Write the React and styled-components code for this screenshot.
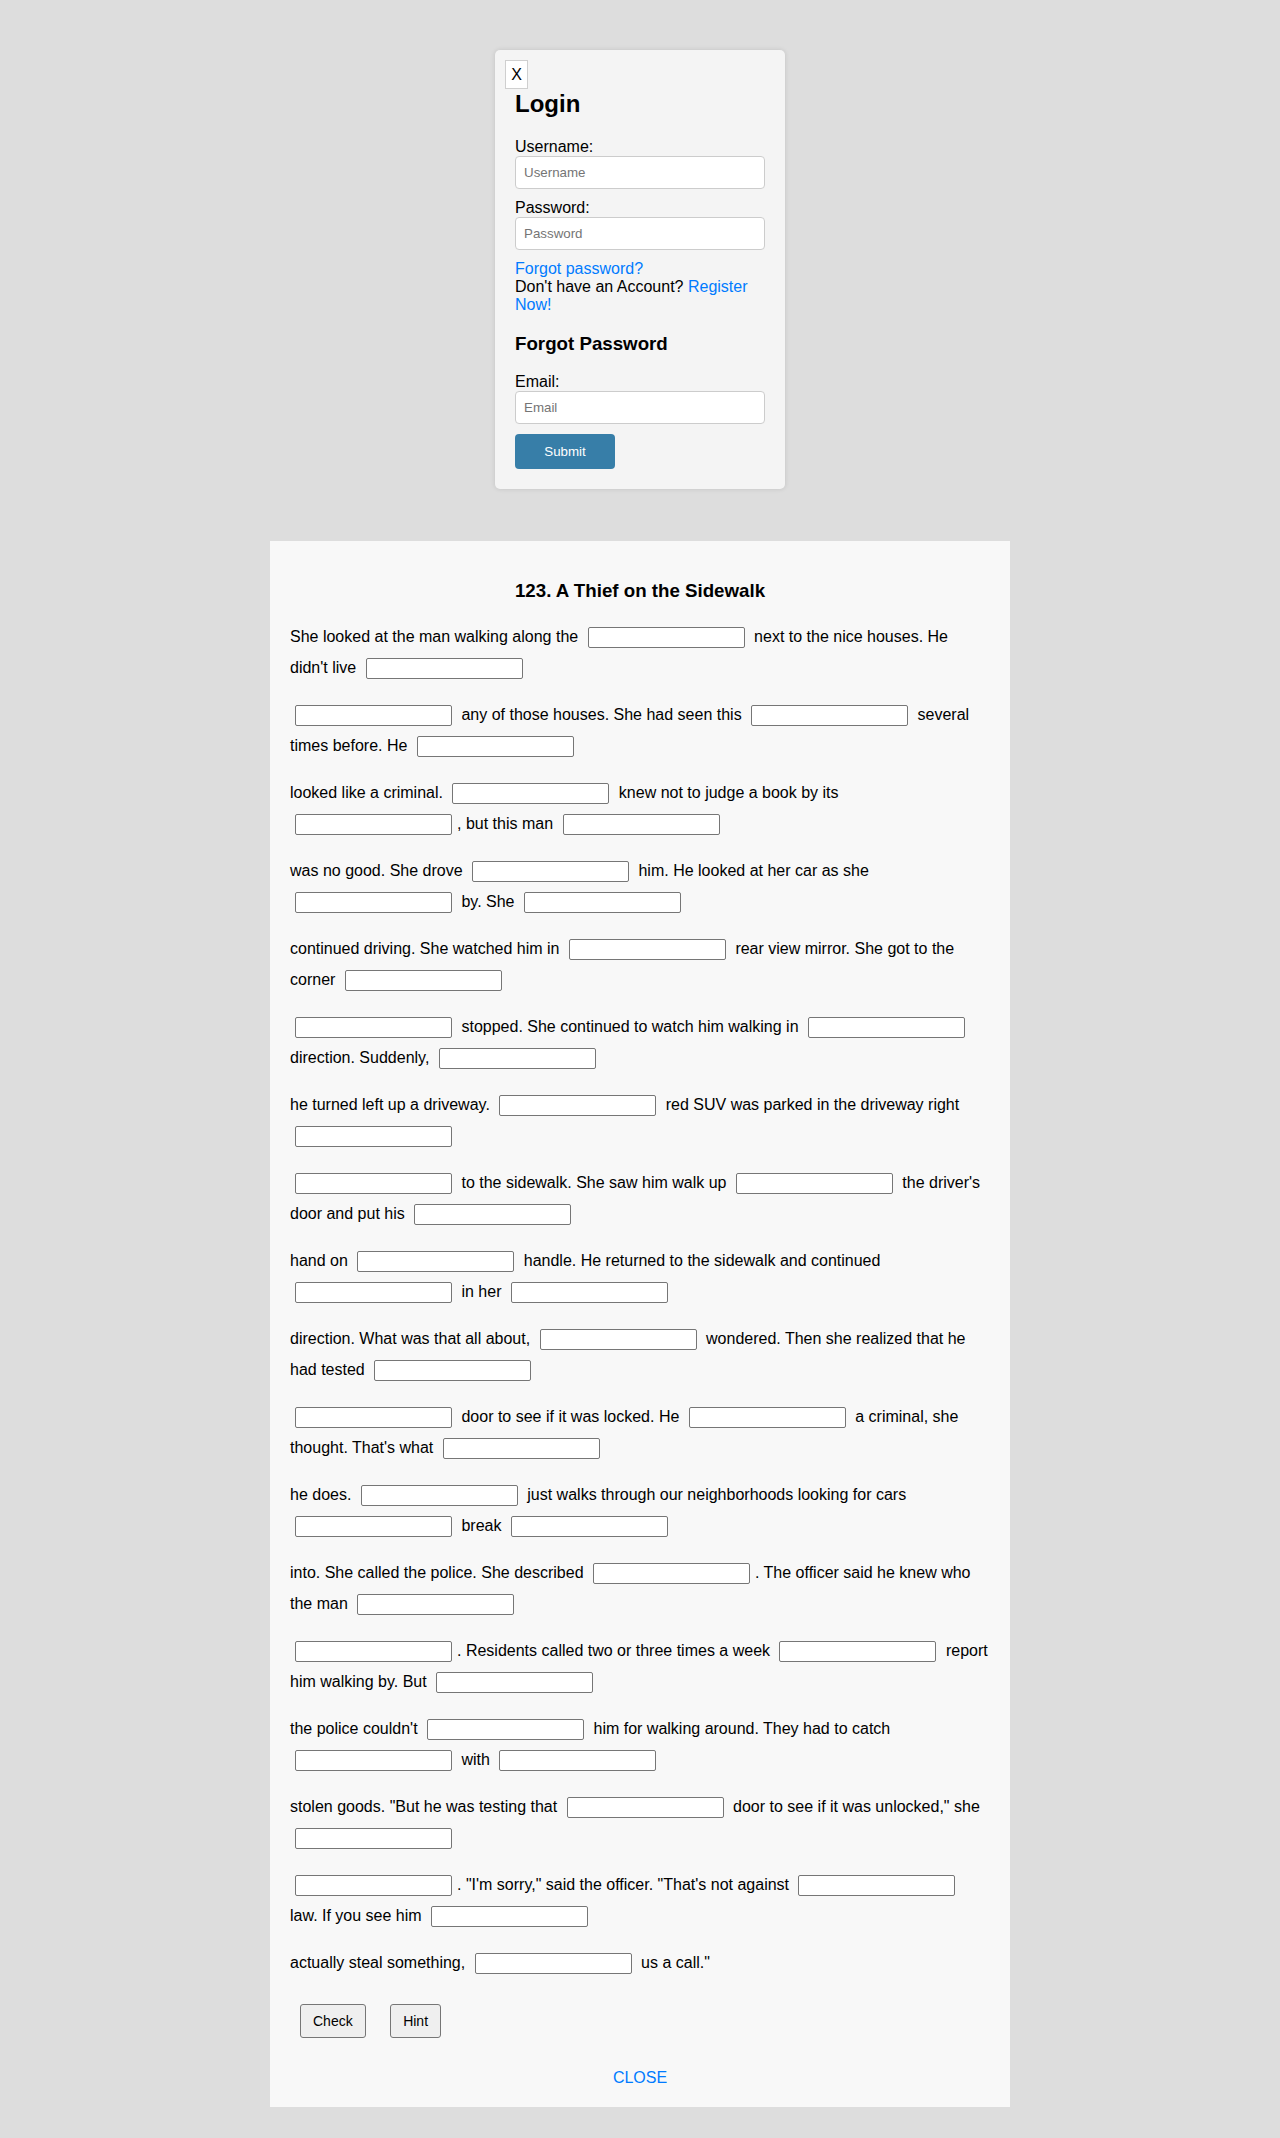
import React from "react";
import styled, { createGlobalStyle } from "styled-components";

const GlobalStyle = createGlobalStyle`
  html, body {
    margin: 0;
    padding: 0;
    background: #dddddd;
  }
  body {
    font-family: "Liberation Sans", Arial, sans-serif;
    font-size: 16px;
    color: #000;
  }
  * { box-sizing: border-box; }
`;

const Page = styled.div`
  display: flex;
  flex-direction: column;
  align-items: center;
  padding: 50px 0 31px;
`;

const LoginBox = styled.div`
  position: relative;
  width: 290px;
  padding: 20px;
  background: #f4f4f4;
  border-radius: 5px;
  box-shadow: 0 0 5px rgba(0, 0, 0, 0.12);
  margin-bottom: 52px;
`;

const CloseX = styled.button`
  position: absolute;
  top: 10px;
  left: 10px;
  width: 23px;
  height: 29px;
  padding: 0;
  background: #fff;
  border: 1px solid #cfcfcf;
  border-radius: 0;
  font-family: "Liberation Sans", Arial, sans-serif;
  font-size: 16px;
  color: #000;
  display: flex;
  align-items: center;
  justify-content: center;
`;

const LoginTitle = styled.h2`
  font-size: 24px;
  font-weight: bold;
  margin: 19.92px 0;
`;

const SubTitle = styled.h3`
  font-size: 18.72px;
  font-weight: bold;
  margin: 18.72px 0;
`;

const Label = styled.label`
  display: block;
  font-size: 16px;
`;

const Field = styled.input`
  display: block;
  width: 100%;
  height: 33px;
  margin: 0 0 10px;
  padding: 0 8px;
  background: #fff;
  border: 1px solid #cccccc;
  border-radius: 4px;
  font-family: "Liberation Sans", Arial, sans-serif;
  font-size: 13.33px;
  color: #000;
  &::placeholder { color: #757575; }
`;

const Link = styled.a`
  color: #007bff;
  text-decoration: none;
  cursor: pointer;
`;

const BlockLink = styled(Link)`
  display: block;
`;

const Note = styled.div`
  font-size: 16px;
`;

const SubmitButton = styled.button`
  display: block;
  width: 100px;
  height: 35px;
  padding: 0;
  border: none;
  border-radius: 4px;
  background: #377ea8;
  color: #fff;
  font-family: "Liberation Sans", Arial, sans-serif;
  font-size: 13.33px;
`;

const Panel = styled.div`
  width: 740px;
  padding: 20px;
  background: #f8f8f8;
`;

const StoryTitle = styled.h3`
  font-size: 18.72px;
  font-weight: bold;
  text-align: center;
  margin: 18.72px 0;
`;

const Para = styled.p`
  margin: 16px 0;
  font-size: 16px;
  line-height: 31px;
`;

const Blank = styled.input`
  display: inline-block;
  width: 157px;
  height: 21px;
  margin: 0 5px;
  padding: 1px 2px;
  vertical-align: baseline;
  background: #fff;
  border: 1px solid #767676;
  border-radius: 2px;
  font-family: "Liberation Sans", Arial, sans-serif;
  font-size: 13.33px;
`;

const Actions = styled.div``;

const ActionButton = styled.button`
  display: inline-block;
  margin: 10px;
  padding: 8px 12px;
  background: #efefef;
  border: 1px solid #767676;
  border-radius: 3px;
  font-family: "Liberation Sans", Arial, sans-serif;
  font-size: 14px;
  color: #000;
`;

const CloseRow = styled.div`
  margin-top: 21px;
  text-align: center;
`;

const paragraphs = [
  "She looked at the man walking along the _ next to the nice houses. He didn't live _",
  "_ any of those houses. She had seen this _ several times before. He _",
  "looked like a criminal. _ knew not to judge a book by its _, but this man _",
  "was no good. She drove _ him. He looked at her car as she _ by. She _",
  "continued driving. She watched him in _ rear view mirror. She got to the corner _",
  "_ stopped. She continued to watch him walking in _ direction. Suddenly, _",
  "he turned left up a driveway. _ red SUV was parked in the driveway right _",
  "_ to the sidewalk. She saw him walk up _ the driver's door and put his _",
  "hand on _ handle. He returned to the sidewalk and continued _ in her _",
  "direction. What was that all about, _ wondered. Then she realized that he had tested _",
  "_ door to see if it was locked. He _ a criminal, she thought. That's what _",
  "he does. _ just walks through our neighborhoods looking for cars _ break _",
  "into. She called the police. She described _. The officer said he knew who the man _",
  "_. Residents called two or three times a week _ report him walking by. But _",
  "the police couldn't _ him for walking around. They had to catch _ with _",
  "stolen goods. \"But he was testing that _ door to see if it was unlocked,\" she _",
  "_. \"I'm sorry,\" said the officer. \"That's not against _ law. If you see him _",
  "actually steal something, _ us a call.\"",
];

function StoryParagraph({ text, index }) {
  const parts = text.split("_");
  const out = [];
  parts.forEach((part, i) => {
    if (part) out.push(<React.Fragment key={`t${i}`}>{part}</React.Fragment>);
    if (i < parts.length - 1) out.push(<Blank key={`b${i}`} type="text" aria-label={`blank ${index}-${i}`} />);
  });
  return <Para>{out}</Para>;
}

export default function App() {
  return (
    <>
      <GlobalStyle />
      <Page>
        <LoginBox>
          <CloseX type="button">X</CloseX>
          <LoginTitle>Login</LoginTitle>
          <Label>Username:</Label>
          <Field type="text" placeholder="Username" />
          <Label>Password:</Label>
          <Field type="password" placeholder="Password" />
          <BlockLink>Forgot password?</BlockLink>
          <Note>
            Don't have an Account? <Link>Register Now!</Link>
          </Note>
          <SubTitle>Forgot Password</SubTitle>
          <Label>Email:</Label>
          <Field type="email" placeholder="Email" />
          <SubmitButton type="button">Submit</SubmitButton>
        </LoginBox>

        <Panel>
          <StoryTitle>123. A Thief on the Sidewalk</StoryTitle>
          {paragraphs.map((p, i) => (
            <StoryParagraph key={i} text={p} index={i} />
          ))}
          <Actions>
            <ActionButton type="button">Check</ActionButton>{" "}
            <ActionButton type="button">Hint</ActionButton>
          </Actions>
          <CloseRow>
            <Link>CLOSE</Link>
          </CloseRow>
        </Panel>
      </Page>
    </>
  );
}
